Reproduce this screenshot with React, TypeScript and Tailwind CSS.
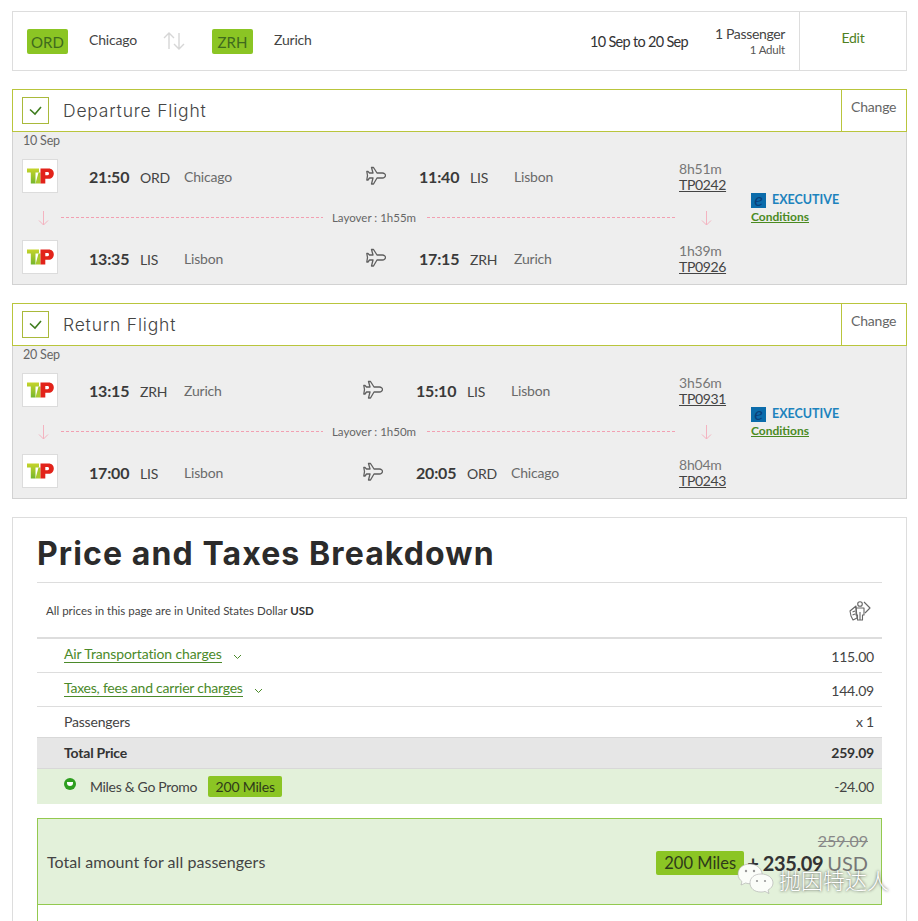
import React from "react";

function TapLogo() {
  return (
    <div className="w-[36px] h-[34px] self-start bg-white border border-[#dcdcdc] flex items-center justify-center shrink-0">
      <svg width="27" height="16" viewBox="0 0 27 16" aria-label="TAP">
        <defs>
          <linearGradient id="tg" x1="0" y1="0" x2="0" y2="1">
            <stop offset="0" stopColor="#c6d42b" />
            <stop offset="1" stopColor="#74b62c" />
          </linearGradient>
        </defs>
        <path d="M0 0.5H12V4.500H8.500V15.500H3.800V4.500H0Z" fill="url(#tg)" />
        <path d="M8.500 15.500L11.500 4.500L13.500 4.500V15.500Z" fill="#a9c92c" />
        <path d="M13.500 0.500H21.500C25 0.500 26.800 2.800 26.800 5.500C26.800 8.500 24.800 10.800 21.500 10.800H18.300V15.500H13.500Z M18.300 4V7.200H20.500C21.500 7.200 22 6.500 22 5.600C22 4.700 21.500 4 20.500 4Z" fill="#e2231a" fillRule="evenodd" />
      </svg>
    </div>
  );
}

function Plane() {
  return (
    <svg width="20" height="20" viewBox="0 0 20 20" fill="none" stroke="#5f5f5f" strokeWidth="1.3" strokeLinejoin="round" className="block">
      <path d="M5.500 1.500H7.500L11 7H16.500C18 7 19.500 8.400 19.500 9.500C19.500 10.600 18 12 16.500 12H11L7.500 18H5.500L7 12H3.500L2 14H0.800L1.500 9.500L0.800 5.500H2L3.500 7H7Z" />
    </svg>
  );
}

function DownArrow() {
  return (
    <svg width="11" height="16" viewBox="0 0 11 16" fill="none" stroke="#f4b3c0" strokeWidth="1" className="block">
      <path d="M5.500 1V15M1 10.500L5.500 15L10 10.500" />
    </svg>
  );
}

function Check() {
  return (
    <div className="w-[27px] h-[27px] border border-[#a9b93a] flex items-center justify-center">
      <svg width="13" height="10" viewBox="0 0 13 10" fill="none" stroke="#3f7d1e" strokeWidth="1.6">
        <path d="M1 3.500L6 8L12 1" />
      </svg>
    </div>
  );
}

type RowProps = {
  dep: string; depCode: string; depCity: string;
  arr: string; arrCode: string; arrCity: string;
  dur: string; num: string; wide?: boolean; last?: boolean;
};

function Row({ dep, depCode, depCity, arr, arrCode, arrCity, dur, num, wide, last }: RowProps) {
  return (
    <div className={last ? "flex items-center h-[36px] -mb-[2px]" : "flex items-center h-[34px]"}>
      <TapLogo />
      <div className="w-[52px] ml-[30px] text-[16px] font-bold text-[#3a3a3a] pt-[2px] pl-[1px]">{dep}</div>
      <div className="w-[44px] text-[14px] text-[#444] pt-[3px]">{depCode}</div>
      <div className={wide ? "w-[182px] text-[14px] text-[#6a6a6a]" : "w-[179px] text-[14px] text-[#6a6a6a]"}>{depCity}</div>
      <div className="w-[53px]"><Plane /></div>
      <div className="w-[51px] text-[16px] font-bold text-[#3a3a3a] pt-[2px]">{arr}</div>
      <div className="w-[44px] text-[14px] text-[#444] pt-[3px]">{arrCode}</div>
      <div className={wide ? "w-[165px] text-[14px] text-[#6a6a6a]" : "w-[168px] text-[14px] text-[#6a6a6a]"}>{arrCity}</div>
      <div className="flex flex-col text-[14px] leading-[16px] pt-[2px]">
        <span className="text-[#777]">{dur}</span>
        <span className="text-[#444] underline tracking-[-0.35px]">{num}</span>
      </div>
    </div>
  );
}

function Layover({ text }: { text: string }) {
  return (
    <div className="flex items-center h-[47px] pt-[2px]">
      <div className="w-[39px] pl-[16px] pt-[1px]"><DownArrow /></div>
      <div className="w-[262px] h-px bg-[repeating-linear-gradient(90deg,#f2a0b2_0_3px,transparent_3px_5px)]" />
      <div className="w-[104px] pr-[2px] text-center text-[11.5px] tracking-[0px] text-[#666]">{text}</div>
      <div className="w-[249px] h-px bg-[repeating-linear-gradient(90deg,#f2a0b2_0_3px,transparent_3px_5px)]" />
      <div className="w-[60px] flex justify-center pt-[1px]"><DownArrow /></div>
    </div>
  );
}

function FlightCard({ title, date, children }: { title: string; date: string; children: React.ReactNode }) {
  return (
    <section className="border border-[#d2d2d2] bg-[#eeeeee]">
      <div className="-mx-px -mt-px flex h-[43px] bg-white border border-[#b9c53c]">
        <div className="flex-1 flex items-center pl-[9px]">
          <Check />
          <h2 className="ml-[14px] pt-[2px] text-[17.5px] text-[#444] tracking-[0.8px]" style={{ fontFamily: "Inter, sans-serif", fontWeight: 300 }}>{title}</h2>
        </div>
        <div className="w-[65px] border-l border-[#b9c53c] pl-[9px] pt-[6px] text-[14px] text-[#666]">Change</div>
      </div>
      <div className="flex pl-[9px] pb-[10px]">
        <div className="w-[729px]">
          <div className="h-[27px] pt-[1px] pl-[1px] text-[12.5px] leading-[15px] text-[#666]">{date}</div>
          {children}
        </div>
        <div className="self-center pt-[12px]">
          <div className="flex items-center">
            <span className="w-[15px] h-[15px] bg-[#0b6cab] text-[#0a3f7a] text-[18px] leading-[13px] italic text-center">e</span>
            <span className="ml-[6px] text-[12.5px] leading-[16px] font-bold text-[#1d83bd] tracking-[0px]">EXECUTIVE</span>
          </div>
          <div className="-mt-[1px] text-[12px] leading-[19px] font-bold text-[#4a8a1f] underline tracking-[0px]">Conditions</div>
        </div>
      </div>
    </section>
  );
}

function PriceRow({ children, value, h, valueClass }: { children: React.ReactNode; value: string; h: string; valueClass?: string }) {
  return (
    <div className={`${h} flex items-center justify-between pl-[27px] pr-[8px] text-[14px] text-[#444]`}>
      <div className="flex items-center">{children}</div>
      <span className={valueClass}>{value}</span>
    </div>
  );
}

function Chevron() {
  return (
    <svg width="9" height="6" viewBox="0 0 9 6" fill="none" stroke="#4b8a2a" strokeWidth="1" className="ml-[11px] mt-[2px]">
      <path d="M1 1L4.500 4.500L8 1" />
    </svg>
  );
}

export default function App() {
  return (
    <div className="relative h-[921px] w-[918px] overflow-hidden bg-white pt-[11px] pl-[12px] pr-[11px] tracking-[-0.2px]" style={{ fontFamily: "Lato, sans-serif" }}>
      <header className="flex items-center h-[60px] border border-[#dddddd] pl-[14px] text-[14px] text-[#444]">
        <span className="w-[41px] h-[25px] rounded-[2px] bg-[#8bc524] text-[#3f6b1d] text-[15px] tracking-[0px] leading-[27px] text-center">ORD</span>
        <span className="ml-[21px] w-[74px] pb-[4px]">Chicago</span>
        <svg width="22" height="18" viewBox="0 0 22 18" fill="none" stroke="#d6d6d6" strokeWidth="1.4">
          <path d="M6 17V1M1 6L6 1L11 6M16 1V17M11 12L16 17L21 12" />
        </svg>
        <span className="ml-[27px] w-[41px] h-[25px] rounded-[2px] bg-[#8bc524] text-[#3f6b1d] text-[15px] tracking-[0px] leading-[27px] text-center">ZRH</span>
        <span className="ml-[21px] w-[316px] pb-[4px]">Zurich</span>
        <span className="w-[125px] text-[14.5px] tracking-[-0.7px] text-[#333] pt-[1px] whitespace-nowrap">10 Sep to 20 Sep</span>
        <div className="w-[70px] flex flex-col items-end text-right whitespace-nowrap pt-[1px]">
          <span className="text-[14px] leading-[16px] tracking-[-0.35px]">1 Passenger</span>
          <span className="text-[11.5px] leading-[15px] text-[#555]">1 Adult</span>
        </div>
        <div className="ml-[14px] flex-1 self-stretch border-l border-[#dddddd] flex items-center justify-center pb-[7px] text-[14px] text-[#4f7f22]">Edit</div>
      </header>

      <div className="mt-[18px]">
        <FlightCard title="Departure Flight" date="10 Sep">
          <Row wide dep="21:50" depCode="ORD" depCity="Chicago" arr="11:40" arrCode="LIS" arrCity="Lisbon" dur="8h51m" num="TP0242" />
          <Layover text="Layover : 1h55m" />
          <Row wide last dep="13:35" depCode="LIS" depCity="Lisbon" arr="17:15" arrCode="ZRH" arrCity="Zurich" dur="1h39m" num="TP0926" />
        </FlightCard>
      </div>

      <div className="mt-[18px]">
        <FlightCard title="Return Flight" date="20 Sep">
          <Row dep="13:15" depCode="ZRH" depCity="Zurich" arr="15:10" arrCode="LIS" arrCity="Lisbon" dur="3h56m" num="TP0931" />
          <Layover text="Layover : 1h50m" />
          <Row last dep="17:00" depCode="LIS" depCity="Lisbon" arr="20:05" arrCode="ORD" arrCity="Chicago" dur="8h04m" num="TP0243" />
        </FlightCard>
      </div>

      <section className="mt-[18px] border border-[#dddddd] px-[24px] h-[500px]">
        <h1 className="h-[65px] pt-[15px] text-[32px] leading-[42px] font-bold text-[#2b2b2b] tracking-[1.1px] border-b border-[#dddddd]" style={{ fontFamily: "Inter, sans-serif" }}>Price and Taxes Breakdown</h1>
        <div className="h-[56px] flex items-center justify-between pl-[9px] pr-[11px] pt-[2px] text-[11.5px] tracking-[0px] text-[#444] border-b-2 border-[#dddddd]">
          <span>All prices in this page are in United States Dollar <b className="text-[#333]">USD</b></span>
          <svg width="22" height="22" viewBox="0 0 22 22" fill="none" stroke="#666" strokeWidth="1.1" strokeLinejoin="round">
            <path d="M1 11L7 6L8 18L4 20L2 16Z" />
            <path d="M15 2L21 8L16 13" />
            <circle cx="11" cy="4" r="2.300" />
            <path d="M7 8H15V15H13.500V20H8.500V15H7ZM11 12V20M3.500 12L6 11M3.500 15L6 14" />
          </svg>
        </div>
        <div className="border-b border-[#dddddd]">
          <PriceRow h="h-[33px]" value="115.00" valueClass="pt-[1px]">
            <span className="text-[#4b8a2a] border-b border-[#4b8a2a] leading-[17px] -mt-[3px] tracking-[-0.12px]">Air Transportation charges</span><Chevron />
          </PriceRow>
        </div>
        <div className="border-b border-[#dddddd]">
          <PriceRow h="h-[33px]" value="144.09" valueClass="pt-[1px]">
            <span className="text-[#4b8a2a] border-b border-[#4b8a2a] leading-[17px] -mt-[3px] tracking-[-0.23px]">Taxes, fees and carrier charges</span><Chevron />
          </PriceRow>
        </div>
        <PriceRow h="h-[30px]" value="x 1" valueClass="pb-[1px]"><span className="-mt-[1px]">Passengers</span></PriceRow>
        <div className="bg-[#e6e6e6] border-t border-b border-[#d8d8d8] font-bold text-[#333]">
          <PriceRow h="h-[30px]" value="259.09" valueClass="font-bold text-[#333] -mt-[2px]"><span className="font-bold text-[#333] -mt-[2px]">Total Price</span></PriceRow>
        </div>
        <div className="bg-[#e3f1da]">
          <PriceRow h="h-[35px]" value="-24.00">
            <span className="w-[12px] h-[12px] rounded-full bg-[#2e9e1f] -mt-[6px] flex items-center justify-center">
              <span className="w-[6px] h-[4px] rounded-b-[3px] bg-white" />
            </span>
            <span className="ml-[14px] tracking-[-0.32px]">Miles &amp; Go Promo</span>
            <span className="ml-[11px] w-[74px] h-[21px] text-center rounded-[2px] bg-[#8bc524] text-[#2f3a1a] leading-[21px]">200 Miles</span>
          </PriceRow>
        </div>
        <div className="mt-[14px] h-[87px] border border-[#93c94f] bg-[#e3f1da] flex items-center justify-between pl-[9px] pr-[13px]">
          <span className="text-[16px] tracking-[0.05px] text-[#444] pt-[1px]">Total amount for all passengers</span>
          <div className="flex flex-col items-end pb-[17px]">
            <span className="text-[16px] tracking-[0px] leading-[20px] text-[#888] line-through">259.09</span>
            <div className="flex items-center">
              <span className="h-[24px] w-[88px] rounded-[2px] bg-[#8bc524] text-[16.5px] tracking-[0px] leading-[24px] text-center text-[#2f3a1a]">200 Miles</span>
              <span className="ml-[3px] text-[20px] tracking-[-0.4px] leading-[24px] font-bold text-[#333]">+ 235.09</span>
              <span className="ml-[4px] text-[20px] tracking-[0px] leading-[24px] text-[#777]">USD</span>
            </div>
          </div>
        </div>
        <div className="h-[30px] border-l border-[#93c94f]" />
      </section>

      <div className="absolute left-[737px] top-[863px] flex items-center">
        <svg width="37" height="31" viewBox="0 0 37 31" fill="#fbfdf9" stroke="#aaa" strokeWidth="0.6">
          <path d="M13 1C6 1 1 5 1 11C1 14.500 3 17 5 18.500L4 22L8.500 20C10 20.500 12 20.800 14 20.800C22 20.800 26 15 25 10C24 5 19 1 13 1Z" />
          <path d="M24 11C17 11 13 15 13 20C13 25 17 29 24 29C25.500 29 27 28.800 28 28.400L32 30.500L31 27C34 25.500 36 23 36 20C36 15 31 11 24 11Z" />
          <circle cx="9" cy="8" r="1.200" fill="#999" stroke="none" />
          <circle cx="17" cy="8" r="1.200" fill="#999" stroke="none" />
          <circle cx="20" cy="18" r="1.100" fill="#999" stroke="none" />
          <circle cx="28" cy="18" r="1.100" fill="#999" stroke="none" />
        </svg>
        <span className="ml-[5px] text-[22px] tracking-[0px] leading-[26px] font-light text-white [text-shadow:0_0_3px_#333]" style={{ fontFamily: '"Noto Sans CJK SC", sans-serif' }}>抛因特达人</span>
      </div>
    </div>
  );
}
